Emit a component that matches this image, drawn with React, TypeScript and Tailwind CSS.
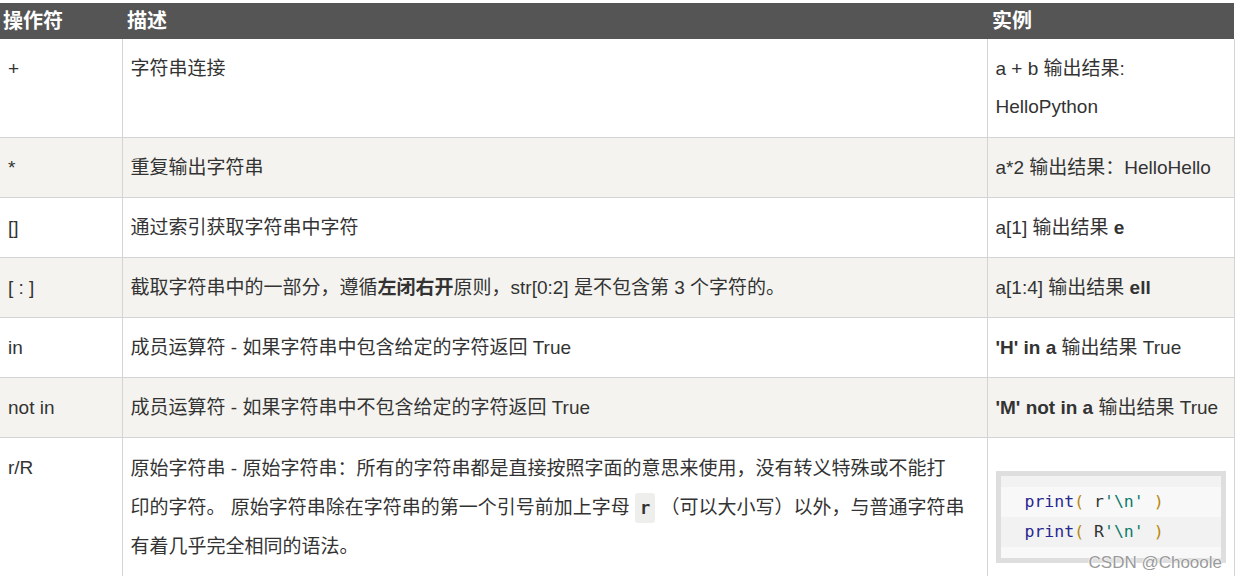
import React from 'react';

const rowText = 'pt-[11px] pb-[10px] px-[8px] leading-[38px] align-top';

const CodeBlock: React.FC = () => (
  <div className="mt-[22px] border-[5px] border-[#dedede] bg-[#f8f8f8] text-[16.5px]" style={{ fontFamily: '"DejaVu Sans Mono", "Liberation Mono", monospace' }}>
    <div className="h-[11px] bg-[#f2f2f2]" />
    <div className="h-[30px] leading-[30px] pl-[24px] bg-[#f8f8f8] whitespace-pre">
      <span className="text-[#26268f]">print</span>
      <span className="text-[#b8860b]">(</span>
      <span className="text-[#333]"> r</span>
      <span className="text-[#0b7b6a]">'\n'</span>
      <span className="text-[#b8860b]"> )</span>
    </div>
    <div className="h-[30px] leading-[30px] pl-[24px] bg-[#f2f2f2] whitespace-pre">
      <span className="text-[#26268f]">print</span>
      <span className="text-[#b8860b]">(</span>
      <span className="text-[#333]"> R</span>
      <span className="text-[#0b7b6a]">'\n'</span>
      <span className="text-[#b8860b]"> )</span>
    </div>
    <div className="h-[11px] bg-[#f8f8f8]" />
  </div>
);

const App: React.FC = () => {
  return (
    <div
      className="relative w-[1237px] h-[577px] overflow-hidden bg-white pt-[3px] text-[19px] text-[#333]"
      style={{ fontFamily: '"Liberation Sans", "Noto Sans CJK SC", sans-serif' }}
    >
      <table className="w-[1234px] table-fixed border-collapse">
        <colgroup>
          <col className="w-[122px]" />
          <col className="w-[865px]" />
          <col className="w-[247px]" />
        </colgroup>
        <thead>
          <tr className="bg-[#555555] text-white h-[36px]">
            <th className="text-left font-bold text-[20px] px-[3px] leading-[36px]">操作符</th>
            <th className="text-left font-bold text-[20px] px-[5px] leading-[36px]">描述</th>
            <th className="text-left font-bold text-[20px] px-[5px] leading-[36px]">实例</th>
          </tr>
        </thead>
        <tbody>
          <tr className="bg-white">
            <td className={`${rowText} pb-[11px] border-r border-b border-[#d4d4d4]`}>+</td>
            <td className={`${rowText} pb-[11px] border-r border-b border-[#d4d4d4]`}>字符串连接</td>
            <td className={`${rowText} pb-[11px] border-r border-b border-[#d4d4d4]`}>
              a + b 输出结果:
              <br />
              HelloPython
            </td>
          </tr>
          <tr className="bg-[#f4f3f0]">
            <td className={`${rowText} border-r border-b border-[#d4d4d4]`}>*</td>
            <td className={`${rowText} border-r border-b border-[#d4d4d4]`}>重复输出字符串</td>
            <td className={`${rowText} border-r border-b border-[#d4d4d4] whitespace-nowrap`}>a*2 输出结果：HelloHello</td>
          </tr>
          <tr className="bg-white">
            <td className={`${rowText} border-r border-b border-[#d4d4d4]`}>[]</td>
            <td className={`${rowText} border-r border-b border-[#d4d4d4]`}>通过索引获取字符串中字符</td>
            <td className={`${rowText} border-r border-b border-[#d4d4d4]`}>
              a[1] 输出结果 <b>e</b>
            </td>
          </tr>
          <tr className="bg-[#f4f3f0]">
            <td className={`${rowText} border-r border-b border-[#d4d4d4]`}>[ : ]</td>
            <td className={`${rowText} border-r border-b border-[#d4d4d4] whitespace-nowrap`}>
              截取字符串中的一部分，遵循<b>左闭右开</b>原则，str[0:2] 是不包含第 3 个字符的。
            </td>
            <td className={`${rowText} border-r border-b border-[#d4d4d4]`}>
              a[1:4] 输出结果 <b>ell</b>
            </td>
          </tr>
          <tr className="bg-white">
            <td className={`${rowText} border-r border-b border-[#d4d4d4]`}>in</td>
            <td className={`${rowText} border-r border-b border-[#d4d4d4]`}>成员运算符 - 如果字符串中包含给定的字符返回 True</td>
            <td className={`${rowText} border-r border-b border-[#d4d4d4] whitespace-nowrap`}>
              <b>'H' in a</b> 输出结果 True
            </td>
          </tr>
          <tr className="bg-[#f4f3f0]">
            <td className={`${rowText} border-r border-b border-[#d4d4d4]`}>not in</td>
            <td className={`${rowText} border-r border-b border-[#d4d4d4]`}>成员运算符 - 如果字符串中不包含给定的字符返回 True</td>
            <td className={`${rowText} border-r border-b border-[#d4d4d4] whitespace-nowrap`}>
              <b>'M' not in a</b> 输出结果 True
            </td>
          </tr>
          <tr className="bg-white">
            <td className={`${rowText} border-r border-[#d4d4d4]`}>r/R</td>
            <td className={`${rowText} border-r border-[#d4d4d4] whitespace-nowrap leading-[39px]`}>
              原始字符串 - 原始字符串：所有的字符串都是直接按照字面的意思来使用，没有转义特殊或不能打
              <br />
              印的字符。 原始字符串除在字符串的第一个引号前加上字母{' '}
              <code
                className="inline-block rounded-[3px] bg-[#eeeeec] px-[5px] leading-[30px] font-bold text-[17px] text-[#333]"
                style={{ fontFamily: '"DejaVu Sans Mono", "Liberation Mono", monospace' }}
              >
                r
              </code>{' '}
              （可以大小写）以外，与普通字符串
              <br />
              有着几乎完全相同的语法。
            </td>
            <td className={`${rowText} border-r border-[#d4d4d4]`}>
              <CodeBlock />
            </td>
          </tr>
        </tbody>
      </table>
      <div
        className="absolute right-[15px] bottom-[6px] text-[17px] text-[#9a9a9a] leading-none"
        style={{ textShadow: '0 0 2px #fff, 0 0 2px #fff' }}
      >
        CSDN @Chooole
      </div>
    </div>
  );
};

export default App;
